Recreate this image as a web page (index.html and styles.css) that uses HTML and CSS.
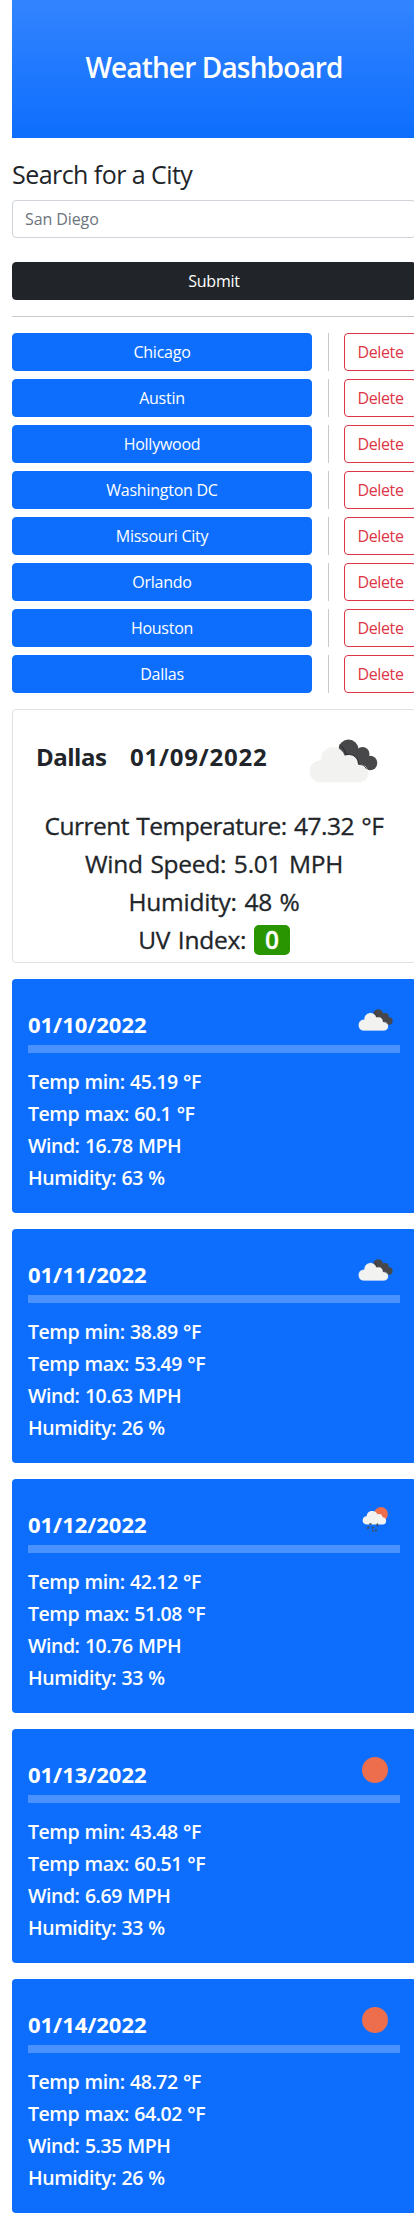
FILE: index.html
```
<!DOCTYPE html>
<html lang="en">
<head>
<meta charset="utf-8">
<title>Weather Dashboard</title>
<link rel="stylesheet" href="styles.css">
</head>
<body>
<svg class="defs" aria-hidden="true">
  <symbol id="clouds" viewBox="0 0 70 44">
    <g fill="#48484a"><circle cx="40.500" cy="10.500" r="10"/><circle cx="54.500" cy="15" r="7"/><circle cx="62" cy="24" r="7.300"/><path d="M36 12h18l6 15-10-2z"/></g>
    <path d="M11 43.200a11 11 0 0 1 0-21.800q1.200 0 2 .2A12 12 0 0 1 36.500 17q8-3 11.800 3 1.700 2.400 1.500 6Q58 24.500 59.800 32q1.600 10-7.800 11.200z" fill="#f2f2f0" stroke="#f9f9f8" stroke-width=".5"/>
    <path d="M31.500 5.500Q36.800 9 37.800 15.500q8-.8 11.200 4 1.700 2.400 1.500 6 5.500-.5 8 4.500" fill="none" stroke="#252527" stroke-width=".8"/>
  </symbol>
  <symbol id="rain" viewBox="0 0 26 26">
    <circle cx="19" cy="7" r="6.900" fill="#ec6e4c"/>
    <path d="M4 17.500a4.200 4.200 0 0 1 .6-8.300 5.700 5.700 0 0 1 10.800-2Q20 6 20.600 10.300q3.500.2 3.500 3.600 0 3.200-3.300 3.600z" fill="#f2f2f0"/>
    <g stroke="#48484a" stroke-width="1.600"><path d="M7.300 17h2.200M15.400 16.500v3M6.800 19.500l-1.300 2.300M11.500 19.800l-1 1.700M10 23.800h1.700M14.500 22.500l-1.100 1.800"/></g>
  </symbol>
</svg>
<main class="page">
  <header class="hero"><h1>Weather Dashboard</h1></header>
  <form class="search">
    <label for="city">Search for a City</label>
    <input id="city" class="field" type="text" placeholder="San Diego">
    <button type="button" class="btn btn-dark">Submit</button>
  </form>
  <hr class="rule">
  <section class="history">
    <div class="row"><button class="btn btn-city">Chicago</button><span class="vr"></span><button class="btn btn-delete">Delete</button></div>
    <div class="row"><button class="btn btn-city">Austin</button><span class="vr"></span><button class="btn btn-delete">Delete</button></div>
    <div class="row"><button class="btn btn-city">Hollywood</button><span class="vr"></span><button class="btn btn-delete">Delete</button></div>
    <div class="row"><button class="btn btn-city">Washington DC</button><span class="vr"></span><button class="btn btn-delete">Delete</button></div>
    <div class="row"><button class="btn btn-city">Missouri City</button><span class="vr"></span><button class="btn btn-delete">Delete</button></div>
    <div class="row"><button class="btn btn-city">Orlando</button><span class="vr"></span><button class="btn btn-delete">Delete</button></div>
    <div class="row"><button class="btn btn-city">Houston</button><span class="vr"></span><button class="btn btn-delete">Delete</button></div>
    <div class="row"><button class="btn btn-city">Dallas</button><span class="vr"></span><button class="btn btn-delete">Delete</button></div>
  </section>
  <section class="current">
    <div class="current-head"><h2 class="city">Dallas</h2><h2 class="today">01/09/2022</h2><svg class="icon-lg"><use href="#clouds"/></svg></div>
    <p class="temperature">Current Temperature: 47.32 °F</p>
    <p>Wind Speed: 5.01 MPH</p>
    <p>Humidity: 48 %</p>
    <p>UV Index: <span class="badge">0</span></p>
  </section>
  <section class="forecast">
    <article class="day"><div class="day-head"><h3>01/10/2022</h3><svg class="icon-clouds"><use href="#clouds"/></svg></div><p>Temp min: 45.19 °F</p><p>Temp max: 60.1 °F</p><p>Wind: 16.78 MPH</p><p>Humidity: 63 %</p></article>
    <article class="day"><div class="day-head"><h3>01/11/2022</h3><svg class="icon-clouds"><use href="#clouds"/></svg></div><p>Temp min: 38.89 °F</p><p>Temp max: 53.49 °F</p><p>Wind: 10.63 MPH</p><p>Humidity: 26 %</p></article>
    <article class="day"><div class="day-head"><h3>01/12/2022</h3><svg class="icon-rain"><use href="#rain"/></svg></div><p>Temp min: 42.12 °F</p><p>Temp max: 51.08 °F</p><p>Wind: 10.76 MPH</p><p>Humidity: 33 %</p></article>
    <article class="day"><div class="day-head"><h3>01/13/2022</h3><span class="icon-sun"></span></div><p>Temp min: 43.48 °F</p><p>Temp max: 60.51 °F</p><p>Wind: 6.69 MPH</p><p>Humidity: 33 %</p></article>
    <article class="day"><div class="day-head"><h3>01/14/2022</h3><span class="icon-sun"></span></div><p>Temp min: 48.72 °F</p><p>Temp max: 64.02 °F</p><p>Wind: 5.35 MPH</p><p>Humidity: 26 %</p></article>
  </section>
</main>
</body>
</html>
```
FILE: styles.css
```
* { box-sizing: border-box; margin: 0; }
html { overflow: hidden; }
body { overflow: hidden; background: #fff; color: #212529; font: 400 16px/24px "Segoe UI", "Open Sans", "Noto Sans", sans-serif; }
.defs { display: block; width: 0; height: 0; }
.page { width: 404px; margin-left: 12px; }
.hero { height: 138px; display: flex; align-items: center; justify-content: center; background: linear-gradient(#3384ff, #0d6efd); color: #fff; }
.hero h1 { font-size: 28px; line-height: 34px; font-weight: 600; letter-spacing: -.85px; padding-bottom: 4px; }
.search { display: flex; flex-direction: column; padding-top: 18px; }
.search label { font-size: 25px; line-height: 36px; height: 44px; letter-spacing: -.55px; }
.field { height: 38px; width: 100%; margin-bottom: 24px; border: 1px solid #ced4da; border-radius: 4px; padding: 0 12px; font: inherit; letter-spacing: -.1px; }
.field::placeholder { color: #6c757d; opacity: 1; }
.btn { height: 38px; border: 1px solid; border-radius: 4px; padding: 0; font: inherit; letter-spacing: -.25px; text-align: center; }
.btn-dark { background: #212529; border-color: #212529; color: #fff; }
.rule { height: 1px; border: 0; background: #c8c9ca; margin: 16px 0; }
.history { display: grid; gap: 8px; }
.row { display: flex; }
.btn-city { width: 300px; background: #0d6efd; border-color: #0d6efd; color: #fff; }
.vr { width: 1px; background: #c8c9ca; margin: 0 15px 0 16px; }
.btn-delete { width: 73px; flex: none; background: #fff; border-color: #dc3545; color: #dc3545; letter-spacing: -.35px; }
.current { height: 254px; margin-top: 16px; border: 1px solid #dee2e6; border-radius: 4px; text-align: center; }
.current-head { height: 97px; padding: 29px 0 0 23px; display: flex; align-items: flex-start; }
.current-head h2 { font-size: 24px; line-height: 36px; font-weight: 700; white-space: nowrap; }
.city { width: 94px; text-align: left; letter-spacing: -.5px; }
.today { width: 178px; text-align: left; letter-spacing: .8px; }
.icon-lg { width: 70px; height: 44px; }
.current p { font-size: 24.5px; line-height: 38px; height: 38px; font-weight: 500; letter-spacing: -.25px; word-spacing: 1.5px; -webkit-text-stroke: .3px; }
.current .temperature { letter-spacing: -.5px; }
.badge { display: inline-block; width: 36px; height: 30px; line-height: 30px; vertical-align: 0; border-radius: 5px; background: #299500; color: #fff; font-weight: 600; }
.forecast { display: grid; gap: 16px; margin-top: 16px; }
.day { height: 234px; padding: 30px 16px 0; background: #0d6efd; border-radius: 4px; color: #fff; }
.day-head { display: flex; justify-content: space-between; align-items: flex-start; height: 44px; border-bottom: 8px solid #4a92fd; margin-bottom: 13px; }
.day h3 { font-size: 22px; line-height: 30px; font-weight: 700; letter-spacing: -.03px; }
.day p { font-size: 19.5px; line-height: 32px; font-weight: 600; letter-spacing: -.45px; word-spacing: .8px; }
.icon-clouds { width: 35px; height: 22px; margin-right: 7px; }
.icon-rain { width: 26px; height: 26px; margin: -2px 12px 0 0; }
.icon-sun { width: 26px; height: 26px; margin: -2px 12px 0 0; border-radius: 50%; background: #ec6e4c; }
```
